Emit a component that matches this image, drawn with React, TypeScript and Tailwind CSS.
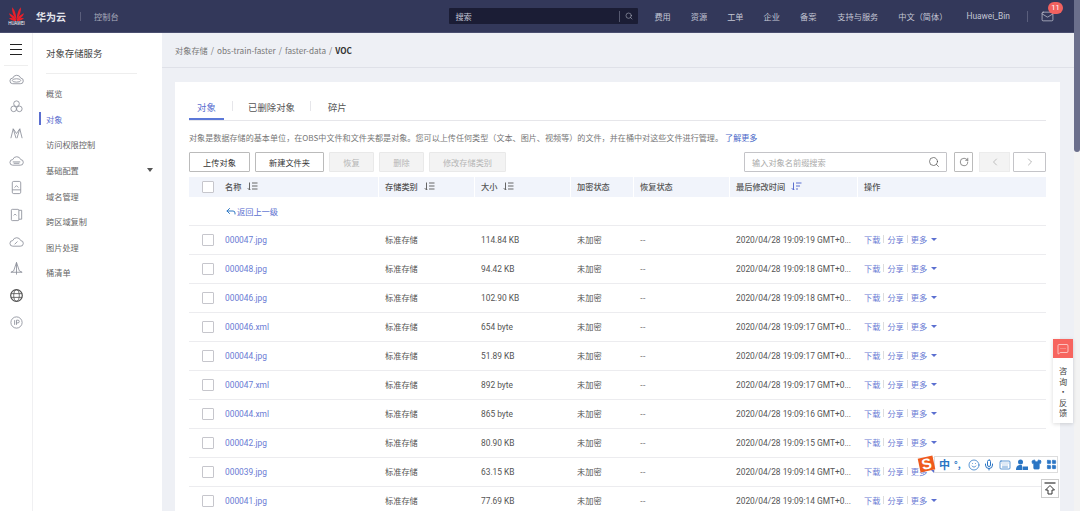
import React from 'react';
import { Search, RotateCw, ChevronLeft, ChevronRight, Mail, Smile, Mic, Keyboard, Shirt, LayoutGrid, MessageSquareMore, Reply } from 'lucide-react';

const rows = [
  ['000047.jpg', '114.84 KB', '19:09:19'],
  ['000048.jpg', '94.42 KB', '19:09:18'],
  ['000046.jpg', '102.90 KB', '19:09:18'],
  ['000046.xml', '654 byte', '19:09:17'],
  ['000044.jpg', '51.89 KB', '19:09:17'],
  ['000047.xml', '892 byte', '19:09:17'],
  ['000044.xml', '865 byte', '19:09:16'],
  ['000042.jpg', '80.90 KB', '19:09:15'],
  ['000039.jpg', '63.15 KB', '19:09:14'],
  ['000041.jpg', '77.69 KB', '19:09:14'],
];

const topLinks = ['费用', '资源', '工单', '企业', '备案'];
const navItems = ['概览', '对象', '访问权限控制', '基础配置', '域名管理', '跨区域复制', '图片处理', '桶清单'];

// petals: [angle, tip y] - the outer ones are shorter so the fan stays inside the box
const petals = [[-72, 13], [-46, 8], [-18, 1], [18, 1], [46, 8], [72, 13]];

const Logo = () => (
  <svg width="17" height="15" viewBox="0 0 34 30">
    {petals.map(([a, tip]) => (
      <path key={a} transform={`rotate(${a} 17 29)`} d={`M17 28 C13.5 ${tip + 16} 14 ${tip + 6} 17 ${tip} C20 ${tip + 6} 20.5 ${tip + 16} 17 28 Z`} fill="#e8202a" />
    ))}
  </svg>
);

const SortIcon = ({ active }: { active?: boolean }) => (
  <svg width="11" height="9" viewBox="0 0 11 9" fill="none" stroke={active ? '#5b6fd0' : '#666'} strokeWidth="1" className="ml-[6px]">
    <path d="M2.5 0.5V8M0.8 6.2L2.5 8L3.2 7" />
    <path d={active ? 'M5 1H10.5M5 4H9M5 7H7' : 'M5 1H10.5M5 4H10.5M5 7H10.5'} />
  </svg>
);

const RailIcon = ({ children }: { children: React.ReactNode }) => (
  <div className="h-[27px] flex items-center justify-center">
    <svg width="15" height="15" viewBox="0 0 16 16" fill="none" stroke="#8b8e99" strokeWidth="0.9">{children}</svg>
  </div>
);

const Rail = () => (
  <div className="w-[33px] shrink-0 border-r border-[#f0f0f2] flex flex-col items-center bg-white">
    <div className="h-[33px] w-[24px] flex flex-col items-center justify-center gap-[4px] border-b border-[#eeeeee]">
      <span className="w-[12px] h-[1px] bg-[#222]" />
      <span className="w-[12px] h-[1px] bg-[#222]" />
      <span className="w-[12px] h-[1px] bg-[#222]" />
    </div>
    <div className="w-full">
      <RailIcon><path d="M4 12.5H12A3 3 0 0 0 12.5 6.5A4.5 4.5 0 0 0 4 6.5A3 3 0 0 0 4 12.5Z" /><ellipse cx="8" cy="9" rx="4.5" ry="1.8" /></RailIcon>
      <RailIcon><circle cx="8" cy="5" r="3" /><circle cx="5" cy="10.5" r="3" /><circle cx="11" cy="10.5" r="3" /></RailIcon>
      <RailIcon><path d="M2 13L4.5 3L7.5 13M8.5 13L11.5 3L14 13M4.5 3L8 8L11.5 3" /></RailIcon>
      <RailIcon><path d="M4 13H12A3 3 0 0 0 12.5 7A4.5 4.5 0 0 0 4 7A3 3 0 0 0 4 13Z" /><path d="M4 9.5H12M5 11H11" /></RailIcon>
      <RailIcon><rect x="3.5" y="1.5" width="9" height="13" rx="1.5" /><path d="M6 8L8 6L10 8M3.5 10.5H12.5" /></RailIcon>
      <RailIcon><rect x="2.5" y="2.5" width="8" height="12" rx="1" /><path d="M10.5 3.5H13.5V13H10.5M5 9L6.5 7.5L8 9" /></RailIcon>
      <RailIcon><path d="M4 13H12A3 3 0 0 0 12.5 7A4.5 4.5 0 0 0 4 7A3 3 0 0 0 4 13Z" /><path d="M6 11L9 8" /></RailIcon>
      <RailIcon><path d="M8 1.5L11 10.5L14 12H2L5 10.5L8 1.5ZM8 1.5V14.5" /></RailIcon>
      <RailIcon><circle cx="8" cy="8" r="6.2" strokeWidth="1.3" stroke="#555" /><ellipse cx="8" cy="8" rx="3" ry="6.2" stroke="#555" /><path d="M2 6H14M2 10H14" stroke="#555" /></RailIcon>
      <RailIcon><circle cx="8" cy="8" r="6" /><path d="M6 5.5V10.5M8 10.5V5.5H9.5A1.4 1.4 0 0 1 9.5 8.4H8" /></RailIcon>
    </div>
  </div>
);

const Nav = () => (
  <div className="w-[129px] shrink-0 bg-white pl-[13px]">
    <div className="h-[41px] mr-[25px] border-b border-[#eeeeee] flex items-end pb-[13px] text-[9.4px] text-[#444]">对象存储服务</div>
    <div className="pt-[6.5px]">
      {navItems.map((item) => (
        <div key={item} className={`relative h-[25.6px] flex items-center text-[8.2px] ${item === '对象' ? 'text-[#5b6fd0]' : 'text-[#666]'}`}>
          {item === '对象' && <span className="absolute left-[-7px] top-[6px] w-[1.5px] h-[13px] bg-[#5b6fd0]" />}
          {item}
          {item === '基础配置' && <span className="absolute right-[9px] top-[11px] w-0 h-0 border-x-[3px] border-x-transparent border-t-[4px] border-t-[#555]" />}
        </div>
      ))}
    </div>
  </div>
);

const Btn = ({ w, off, children }: { w: string; off?: boolean; children: React.ReactNode }) => (
  <div className={`${w} h-[20px] flex items-center justify-center rounded-[1px] border text-[8.2px] ${off ? 'border-[#e9e9e9] bg-[#f3f3f3] text-[#b5b5b5]' : 'border-[#bbbbbb] bg-white text-[#333]'}`}>
    {children}
  </div>
);

const Check = () => <span className="w-[12px] h-[12px] border border-[#c6c6cc] rounded-[1px] bg-white block ml-[13px]" />;

const Th = ({ children }: { children?: React.ReactNode }) => (
  <div className="flex items-center h-full -ml-[7px] pl-[6px] pb-[1px] border-l border-white text-[8.2px] font-medium text-[#555]">{children}</div>
);

const Table = () => (
  <div className="mt-[5px]">
    <div className="h-[20px] bg-[#f1f4fb] grid grid-cols-[36px_160px_96px_96px_63px_96px_128px_182px] items-center">
      <div className="flex items-center h-full"><Check /></div>
      <div className="flex items-center h-full pb-[1px] text-[8.2px] font-medium text-[#555]">名称<SortIcon /></div>
      <Th>存储类别<SortIcon /></Th>
      <Th>大小<SortIcon /></Th>
      <Th>加密状态</Th>
      <Th>恢复状态</Th>
      <Th>最后修改时间<SortIcon active /></Th>
      <Th>操作</Th>
    </div>
    <div className="h-[29px] pl-[36px] flex items-center border-b border-[#ececef] text-[8.2px] text-[#5b6fd0]">
      <Reply size={12} strokeWidth={2} className="text-[#2f78c4]" />返回上一级
    </div>
    {rows.map(([name, size, time]) => (
      <div key={name} className="h-[29px] grid grid-cols-[36px_160px_96px_96px_63px_96px_128px_182px] items-center border-b border-[#ececef] pb-[1px] text-[8.2px] text-[#555]">
        <Check />
        <span className="pt-[1px] text-[8.4px] text-[#6a7bd4]" style={{ fontFamily: 'Roboto, sans-serif' }}>{name}</span>
        <span>标准存储</span>
        <span className="pt-[1px] text-[8.4px]" style={{ fontFamily: 'Roboto, sans-serif' }}>{size}</span>
        <span>未加密</span>
        <span>--</span>
        <span className="pt-[1px] text-[8.4px] whitespace-nowrap" style={{ fontFamily: 'Roboto, sans-serif' }}>2020/04/28 {time} GMT+0...</span>
        <span className="flex items-center text-[#6a7bd4]">
          下载<i className="mx-[3px] w-[1px] h-[8px] bg-[#ddd]" />分享<i className="mx-[3px] w-[1px] h-[8px] bg-[#ddd]" />更多
          <i className="ml-[4px] w-0 h-0 border-x-[3px] border-x-transparent border-t-[3px] border-t-[#5b6fd0]" />
        </span>
      </div>
    ))}
  </div>
);

const Card = () => (
  <div className="bg-white px-[14px] pt-[16px]">
    <div className="h-[23px] flex items-start border-b border-[#e6e6ea] text-[9.4px] text-[#555]">
      <div className="w-[35px] h-[22px] border-b-2 border-[#5b78d8] text-[#5b6fd0] text-center leading-[18px]">对象</div>
      <span className="ml-[8px] mt-[3px] w-[1px] h-[10px] bg-[#e6e6ea]" />
      <span className="ml-[15px] leading-[18px]">已删除对象</span>
      <span className="ml-[15px] mt-[3px] w-[1px] h-[10px] bg-[#e6e6ea]" />
      <span className="ml-[17px] leading-[18px]">碎片</span>
    </div>
    <div className="h-[31px] flex items-center pt-[4px] text-[8.1px] text-[#777] whitespace-nowrap">
      对象是数据存储的基本单位，在OBS中文件和文件夹都是对象。您可以上传任何类型（文本、图片、视频等）的文件，并在桶中对这些文件进行管理。
      <span className="ml-[2px] text-[#4a68c8]">了解更多</span>
    </div>
    <div className="flex items-center">
      <div className="flex gap-[5px]">
        <Btn w="w-[61px]">上传对象</Btn>
        <Btn w="w-[69px]">新建文件夹</Btn>
        <Btn w="w-[45px]" off>恢复</Btn>
        <Btn w="w-[45px]" off>删除</Btn>
        <Btn w="w-[77px]" off>修改存储类别</Btn>
      </div>
      <div className="ml-auto w-[203px] h-[20px] border border-[#c4c4c8] rounded-[1px] flex items-center pl-[7px] pr-[6px] text-[8.2px] text-[#aaa]">
        输入对象名前缀搜索
        <Search size={12} strokeWidth={1.3} className="ml-auto text-[#444]" />
      </div>
      <div className="ml-[7px] w-[19px] h-[20px] border border-[#bbb] rounded-[1px] flex items-center justify-center">
        <RotateCw size={10} strokeWidth={1.4} className="text-[#444]" />
      </div>
      <div className="ml-[6px] w-[31px] h-[20px] bg-[#f3f3f3] border border-[#ececec] flex items-center justify-center">
        <ChevronLeft size={12} strokeWidth={1.2} className="text-[#999]" />
      </div>
      <div className="ml-[3px] w-[33px] h-[20px] border border-[#c4c4c8] rounded-[1px] flex items-center justify-center">
        <ChevronRight size={12} strokeWidth={1.2} className="text-[#888]" />
      </div>
    </div>
    <Table />
  </div>
);

const Header = () => (
  <div className="h-[33px] shrink-0 bg-[#33385a] border-b border-[#4a4f70] flex items-center text-[#c3c6d4] text-[8.2px]">
    <div className="w-[33px] flex flex-col items-center">
      <Logo />
      <span className="text-[4.5px] leading-[5px] text-white" style={{ fontFamily: 'Roboto, sans-serif' }}>HUAWEI</span>
    </div>
    <span className="ml-[3px] text-[10px] font-bold text-[#e4e5ec]">华为云</span>
    <i className="ml-[14px] w-[1px] h-[9px] bg-[#5a5e7c]" />
    <span className="ml-[13px] text-[#a9acbd]">控制台</span>
    <div className="ml-auto flex items-center">
      <div className="w-[189px] h-[16px] bg-[#1b1d35] rounded-[1px] flex items-center pl-[6px]">
        搜索
        <i className="ml-auto w-[1px] h-[11px] bg-[#55586f]" />
        <Search size={8} strokeWidth={1.5} className="mx-[5px]" />
      </div>
      <div className="ml-[16px] flex gap-[20px]">
        {topLinks.map((l) => <span key={l}>{l}</span>)}
      </div>
      <span className="ml-[21px]">支持与服务</span>
      <span className="ml-[20px]">中文（简体）</span>
      <span className="ml-[19px] text-[8.4px]" style={{ fontFamily: 'Roboto, sans-serif' }}>Huawei_Bin</span>
      <i className="ml-[17px] w-[1px] h-[11px] bg-[#5a5e7c]" />
      <div className="relative ml-[13px] mr-[20px]">
        <Mail size={13} strokeWidth={1.2} className="text-[#d5d7e2]" />
        <span className="absolute -top-[8px] left-[7px] w-[15px] h-[12px] rounded-full bg-[#f2615f] text-white text-[7.5px] flex items-center justify-center" style={{ fontFamily: 'Roboto, sans-serif' }}>11</span>
      </div>
    </div>
  </div>
);

const Feedback = () => (
  <div className="absolute left-[1053px] top-[339px] w-[20px] h-[84px] bg-white shadow-[0_1px_4px_rgba(0,0,0,0.15)] flex flex-col items-center text-[8.2px] leading-[10.6px] text-[#444]">
    <div className="w-full h-[19px] bg-[#f7655f] flex items-center justify-center mb-[7px]">
      <MessageSquareMore size={12} strokeWidth={1.2} className="text-white" />
    </div>
    <span>咨</span><span>询</span><span>·</span><span>反</span><span>馈</span>
  </div>
);

const Sogou = () => (
  <div className="absolute left-[919px] top-[455px] w-[139px] flex items-center">
    <div className="w-[18px] h-[16px] flex items-center justify-center">
      <div className="w-[15px] h-[14px] -rotate-12 bg-[#ef5a1c] text-white text-[15px] font-bold leading-[14px] text-center" style={{ fontFamily: 'Liberation Sans, sans-serif' }}>S</div>
    </div>
    <div className="flex-1 h-[17px] mt-[1px] bg-white border border-[#dddddd] flex items-center pl-[4px] text-[#2a75c4]">
      <span className="w-[11px] text-[11px] font-bold leading-none">中</span>
      <span className="ml-[4px] w-[9px] text-[9px] font-bold leading-none">°,</span>
      <Smile size={12} strokeWidth={1.5} className="ml-[5px]" />
      <Mic size={12} strokeWidth={2} className="ml-[3px]" />
      <Keyboard size={12} strokeWidth={1.5} className="ml-[4px]" />
      <svg width="12" height="12" viewBox="0 0 12 12" className="ml-[5px]" fill="#2a75c4">
        <circle cx="4.5" cy="3" r="2.5" />
        <path d="M0 11C0 7 2 6 4.5 6C5 6 5.5 6 6 6.2V11Z" />
        <rect x="6.5" y="7.5" width="5.5" height="3.5" />
      </svg>
      <Shirt size={11} strokeWidth={1.5} fill="#2a75c4" className="ml-[3px]" />
      <LayoutGrid size={11} strokeWidth={1.5} fill="#2a75c4" className="ml-[4px]" />
    </div>
  </div>
);

export default function App() {
  return (
    <div className="relative h-[511px] w-[1080px] overflow-hidden flex bg-white" style={{ fontFamily: '"Noto Sans CJK SC", Roboto, sans-serif' }}>
      <div className="flex-1 min-w-0 flex flex-col">
        <Header />
        <div className="flex flex-1 min-h-0">
          <Rail />
          <Nav />
          <div className="flex-1 min-w-0 bg-[#eef0f5]">
            <div className="h-[35px] border-b border-[#dfe1e8] pl-[13px] flex items-center text-[8.2px] text-[#777]">
              对象存储<span className="mx-[3px]">/</span>obs-train-faster<span className="mx-[3px]">/</span>faster-data<span className="mx-[3px]">/</span>
              <b className="text-[#333] font-bold">VOC</b>
            </div>
            <div className="pl-[13px] pr-[14px] pt-[14px]">
              <Card />
            </div>
          </div>
        </div>
      </div>
      <div className="w-[6px] shrink-0 bg-[#f3f3f3]">
        <div className="h-[152px] rounded-b-[3px] bg-[#6b6f8c]" />
      </div>
      <Feedback />
      <Sogou />
      <div className="absolute left-[1041px] top-[479px] w-[18px] h-[19px] bg-white border border-[#cccccc] flex items-center justify-center">
        <svg width="12" height="13" viewBox="0 0 12 13" fill="none" stroke="#333" strokeWidth="1">
          <path d="M0.5 1H11.5" strokeWidth="1.2" />
          <path d="M6 3.5L10.5 8H8V12H4V8H1.5Z" />
        </svg>
      </div>
    </div>
  );
}
